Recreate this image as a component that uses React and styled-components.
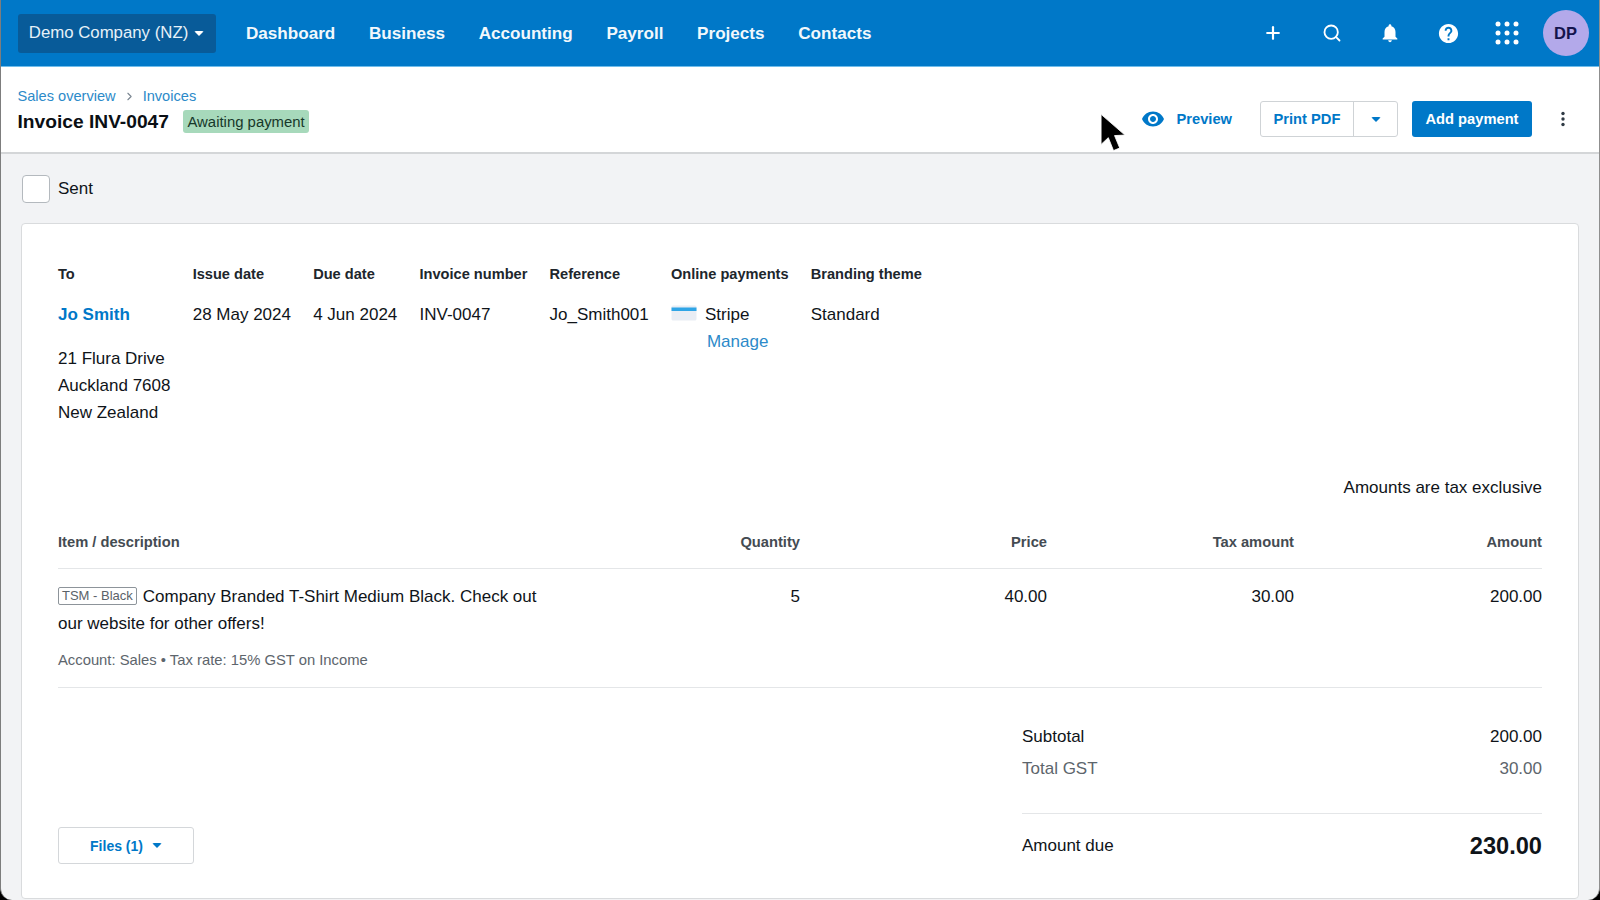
import React from 'react';
import styled, { createGlobalStyle } from 'styled-components';
import { Plus, Search, ChevronRight } from 'lucide-react';
import { MdNotifications, MdHelp, MdVisibility } from 'react-icons/md';

const GlobalStyle = createGlobalStyle`
  html, body {
    margin: 0;
    padding: 0;
    background: #000;
  }
  body {
    font-family: "Liberation Sans", Arial, sans-serif;
    color: #0f1419;
  }
  * {
    box-sizing: border-box;
  }
`;

const Page = styled.div`
  width: 1600px;
  height: 900px;
  overflow: hidden;
  background: #f2f3f5;
  border-radius: 0 0 12px 12px;
  border-left: 1px solid #7d7d7d;
  border-right: 1px solid #8f8f8f;
`;

const TopBar = styled.header`
  height: 67px;
  background: #0078c8;
  border-bottom: 1px solid #6fbdeb;
  display: flex;
  align-items: center;
  padding: 0 10.5px 0 16.5px;
`;

const OrgButton = styled.button`
  width: 198px;
  height: 39px;
  margin-right: 30.5px;
  padding-top: 1px;
  background: #085b99;
  border: none;
  border-radius: 3px;
  color: #e6f1f8;
  font: 400 16.8px "Liberation Sans", Arial, sans-serif;
  display: flex;
  align-items: center;
  justify-content: center;
  gap: 6px;
`;

const Caret = styled.span`
  width: 0;
  height: 0;
  border-left: ${(p) => p.$size || 5}px solid transparent;
  border-right: ${(p) => p.$size || 5}px solid transparent;
  border-top: ${(p) => p.$size || 5}px solid ${(p) => p.$color || '#0078c8'};
  border-radius: 2px;
`;

const Nav = styled.nav`
  display: flex;
  gap: 33.7px;
  flex: 1;
`;

const NavItem = styled.a`
  color: #f2f8fc;
  font-size: 17.1px;
  font-weight: 700;
  padding-top: 1px;
`;

const TopIcons = styled.div`
  display: flex;
  align-items: center;
`;

const IconSlot = styled.span`
  width: 58.5px;
  height: 46px;
  display: flex;
  align-items: center;
  justify-content: center;
  color: #fff;
`;

const Avatar = styled.div`
  width: 46px;
  height: 46px;
  margin-left: 6px;
  border-radius: 50%;
  background: #b3a9ea;
  color: #14144d;
  font-size: 16.5px;
  font-weight: 700;
  display: flex;
  align-items: center;
  justify-content: center;
`;

const SubHeader = styled.div`
  height: 87px;
  background: #fff;
  border-bottom: 2px solid #d4d6d8;
  display: flex;
  align-items: flex-start;
  justify-content: space-between;
  padding: 19px 29px 0 16.5px;
`;

const Breadcrumbs = styled.div`
  display: flex;
  align-items: center;
  gap: 7px;
  height: 20px;
  font-size: 14.6px;
  color: #2c8ac9;
  svg {
    color: #7a8691;
  }
`;

const TitleRow = styled.div`
  display: flex;
  align-items: center;
  gap: 14px;
  margin-top: 4px;
`;

const Title = styled.h1`
  margin: 0;
  font-size: 19.2px;
  font-weight: 700;
  color: #0b0f14;
`;

const Badge = styled.span`
  height: 23px;
  padding: 0 4.5px;
  display: flex;
  align-items: center;
  background: #a7d9bb;
  border-radius: 3px;
  font-size: 14.9px;
  color: #17382a;
`;

const Actions = styled.div`
  display: flex;
  align-items: center;
  margin-top: 15px;
`;

const PreviewLink = styled.a`
  display: flex;
  align-items: center;
  gap: 11px;
  margin-right: 28px;
  color: #0078c8;
  font-size: 14.7px;
  font-weight: 700;
`;

const SplitButton = styled.div`
  display: flex;
  height: 36px;
  margin-right: 14px;
  background: #fff;
  border: 1px solid #cfd3d6;
  border-radius: 3px;
`;

const SplitLabel = styled.span`
  width: 92px;
  display: flex;
  align-items: center;
  justify-content: center;
  color: #0078c8;
  font-size: 14.7px;
  font-weight: 700;
`;

const SplitCaret = styled.span`
  width: 44px;
  border-left: 1px solid #cfd3d6;
  display: flex;
  align-items: center;
  justify-content: center;
`;

const PrimaryButton = styled.button`
  width: 120px;
  height: 36px;
  margin-right: 24px;
  background: #0078c8;
  border: none;
  border-radius: 3px;
  color: #fff;
  font: 700 14.7px "Liberation Sans", Arial, sans-serif;
`;

const Content = styled.main`
  padding: 20.5px 20px 0 20px;
`;

const SentRow = styled.label`
  display: flex;
  align-items: center;
  gap: 8px;
  height: 28px;
  margin-bottom: 20.5px;
  padding-left: 1px;
  font-size: 17px;
`;

const CheckBox = styled.span`
  width: 28px;
  height: 28px;
  background: #fff;
  border: 1px solid #b4b9be;
  border-radius: 4px;
`;

const Card = styled.section`
  height: 676px;
  background: #fff;
  border: 1px solid #d9dbdd;
  border-radius: 4px;
  padding: 41px 36px 0 36px;
`;

const Meta = styled.div`
  display: flex;
  gap: 22.2px;
  height: 199px;
`;

const MetaColumn = styled.div`
  display: flex;
  flex-direction: column;
  font-size: 17px;
  line-height: 27px;
`;

const MetaLabel = styled.div`
  height: 36px;
  line-height: 18px;
  font-size: 14.6px;
  font-weight: 700;
  color: #20262c;
`;

const CustomerLink = styled.a`
  height: 44px;
  color: #0078c8;
  font-weight: 700;
`;

const StripeRow = styled.div`
  display: flex;
  align-items: center;
  gap: 8px;
  svg {
    margin-bottom: 3px;
  }
`;

const ManageLink = styled.a`
  margin-left: 36px;
  color: #2c8ac9;
`;

const TaxNote = styled.div`
  height: 70px;
  padding-top: 14px;
  line-height: 19px;
  text-align: right;
  font-size: 17px;
`;

const LineGrid = styled.div`
  display: grid;
  grid-template-columns: 1fr 120px 247px 247px 248px;
  font-size: 17px;
`;

const HeadRow = styled(LineGrid)`
  height: 35px;
  font-size: 14.7px;
  font-weight: 700;
  color: #444b52;
  border-bottom: 1px solid #e4e6e8;
  align-items: start;
`;

const ItemRow = styled(LineGrid)`
  height: 119px;
  padding-top: 14px;
  line-height: 27px;
  border-bottom: 1px solid #e4e6e8;
`;

const Numeric = styled.div`
  text-align: right;
`;

const Description = styled.div`
  width: 490px;
`;

const SkuTag = styled.span`
  display: inline-block;
  height: 18px;
  line-height: 15px;
  margin-right: 6px;
  padding: 0 3px;
  border: 1px solid #8d949a;
  border-radius: 2px;
  font-size: 13px;
  color: #5a6269;
  vertical-align: 2px;
`;

const AccountInfo = styled.div`
  margin-top: 13px;
  line-height: 20px;
  font-size: 14.8px;
  color: #5d656c;
`;

const Footer = styled.div`
  display: flex;
  justify-content: space-between;
  align-items: flex-end;
`;

const FilesButton = styled.button`
  width: 136px;
  height: 37px;
  margin-bottom: 14.5px;
  background: #fff;
  border: 1px solid #d4d7da;
  border-radius: 3px;
  color: #0078c8;
  font: 700 14px "Liberation Sans", Arial, sans-serif;
  display: flex;
  align-items: center;
  justify-content: center;
  gap: 9px;
`;

const Totals = styled.div`
  width: 520px;
  padding-top: 32.5px;
`;

const TotalRow = styled.div`
  display: flex;
  justify-content: space-between;
  align-items: center;
  height: 32px;
  font-size: 17px;
  color: ${(p) => (p.$muted ? '#5d656c' : '#0f1419')};
`;

const AmountDue = styled(TotalRow)`
  height: 66px;
  margin-top: 28px;
  border-top: 1px solid #e4e6e8;
`;

const DueValue = styled.strong`
  font-size: 23.6px;
`;

const PointerOverlay = styled.svg`
  position: absolute;
  left: 1099px;
  top: 113px;
`;

const apps = [
  [5, 5], [14, 5], [23, 5],
  [5, 14], [14, 14], [23, 14],
  [5, 23], [14, 23], [23, 23],
];

const NAV_ITEMS = ['Dashboard', 'Business', 'Accounting', 'Payroll', 'Projects', 'Contacts'];

const META = [
  { label: 'Issue date', value: '28 May 2024' },
  { label: 'Due date', value: '4 Jun 2024' },
  { label: 'Invoice number', value: 'INV-0047' },
  { label: 'Reference', value: 'Jo_Smith001' },
];

const App = () => (
  <Page>
    <GlobalStyle />
    <TopBar>
      <OrgButton>
        Demo Company (NZ) <Caret $color="#fff" $size={5.5} />
      </OrgButton>
      <Nav>
        {NAV_ITEMS.map((item) => (
          <NavItem key={item}>{item}</NavItem>
        ))}
      </Nav>
      <TopIcons>
        <IconSlot><Plus size={20} strokeWidth={2.6} /></IconSlot>
        <IconSlot><Search size={20} strokeWidth={2.2} /></IconSlot>
        <IconSlot><MdNotifications size={22} /></IconSlot>
        <IconSlot><MdHelp size={23} /></IconSlot>
        <IconSlot>
          <svg width="28" height="28" viewBox="0 0 28 28" fill="#fff">
            {apps.map(([cx, cy]) => (
              <circle key={`${cx}-${cy}`} cx={cx} cy={cy} r="2.5" />
            ))}
          </svg>
        </IconSlot>
        <Avatar>DP</Avatar>
      </TopIcons>
    </TopBar>

    <SubHeader>
      <div>
        <Breadcrumbs>
          <span>Sales overview</span>
          <ChevronRight size={13} />
          <span>Invoices</span>
        </Breadcrumbs>
        <TitleRow>
          <Title>Invoice INV-0047</Title>
          <Badge>Awaiting payment</Badge>
        </TitleRow>
      </div>
      <Actions>
        <PreviewLink>
          <MdVisibility size={24} />
          Preview
        </PreviewLink>
        <SplitButton>
          <SplitLabel>Print PDF</SplitLabel>
          <SplitCaret><Caret /></SplitCaret>
        </SplitButton>
        <PrimaryButton>Add payment</PrimaryButton>
        <svg width="14" height="18" viewBox="0 0 14 18" fill="#2f3a44">
          <circle cx="7" cy="3.5" r="1.7" />
          <circle cx="7" cy="9" r="1.7" />
          <circle cx="7" cy="14.5" r="1.7" />
        </svg>
      </Actions>
    </SubHeader>

    <Content>
      <SentRow>
        <CheckBox />
        Sent
      </SentRow>
      <Card>
        <Meta>
          <MetaColumn>
            <MetaLabel>To</MetaLabel>
            <CustomerLink>Jo Smith</CustomerLink>
            <div>21 Flura Drive</div>
            <div>Auckland 7608</div>
            <div>New Zealand</div>
          </MetaColumn>
          {META.map((col) => (
            <MetaColumn key={col.label}>
              <MetaLabel>{col.label}</MetaLabel>
              <div>{col.value}</div>
            </MetaColumn>
          ))}
          <MetaColumn>
            <MetaLabel>Online payments</MetaLabel>
            <StripeRow>
              <svg width="26" height="16" viewBox="0 0 26 16">
                <rect x="0.5" y="0.5" width="25" height="15" rx="1.5" fill="#e9edf4" />
                <rect x="0.5" y="2.5" width="25" height="3.5" fill="#2fa5e6" />
              </svg>
              Stripe
            </StripeRow>
            <ManageLink>Manage</ManageLink>
          </MetaColumn>
          <MetaColumn>
            <MetaLabel>Branding theme</MetaLabel>
            <div>Standard</div>
          </MetaColumn>
        </Meta>

        <TaxNote>Amounts are tax exclusive</TaxNote>

        <HeadRow>
          <div>Item / description</div>
          <Numeric>Quantity</Numeric>
          <Numeric>Price</Numeric>
          <Numeric>Tax amount</Numeric>
          <Numeric>Amount</Numeric>
        </HeadRow>
        <ItemRow>
          <div>
            <Description>
              <SkuTag>TSM - Black</SkuTag>
              Company Branded T-Shirt Medium Black. Check out our website for other offers!
            </Description>
            <AccountInfo>Account: Sales • Tax rate: 15% GST on Income</AccountInfo>
          </div>
          <Numeric>5</Numeric>
          <Numeric>40.00</Numeric>
          <Numeric>30.00</Numeric>
          <Numeric>200.00</Numeric>
        </ItemRow>

        <Footer>
          <FilesButton>
            Files (1) <Caret />
          </FilesButton>
          <Totals>
            <TotalRow>
              <span>Subtotal</span>
              <span>200.00</span>
            </TotalRow>
            <TotalRow $muted>
              <span>Total GST</span>
              <span>30.00</span>
            </TotalRow>
            <AmountDue>
              <span>Amount due</span>
              <DueValue>230.00</DueValue>
            </AmountDue>
          </Totals>
        </Footer>
      </Card>
    </Content>

    <PointerOverlay width="29" height="40" viewBox="0 0 28 38">
      <path d="M2 1 L2 30 L9 23.5 L14 36 L20 33.5 L15 21.5 L25 21 Z" fill="#000" stroke="#fff" strokeWidth="0.8" />
    </PointerOverlay>
  </Page>
);

export default App;
